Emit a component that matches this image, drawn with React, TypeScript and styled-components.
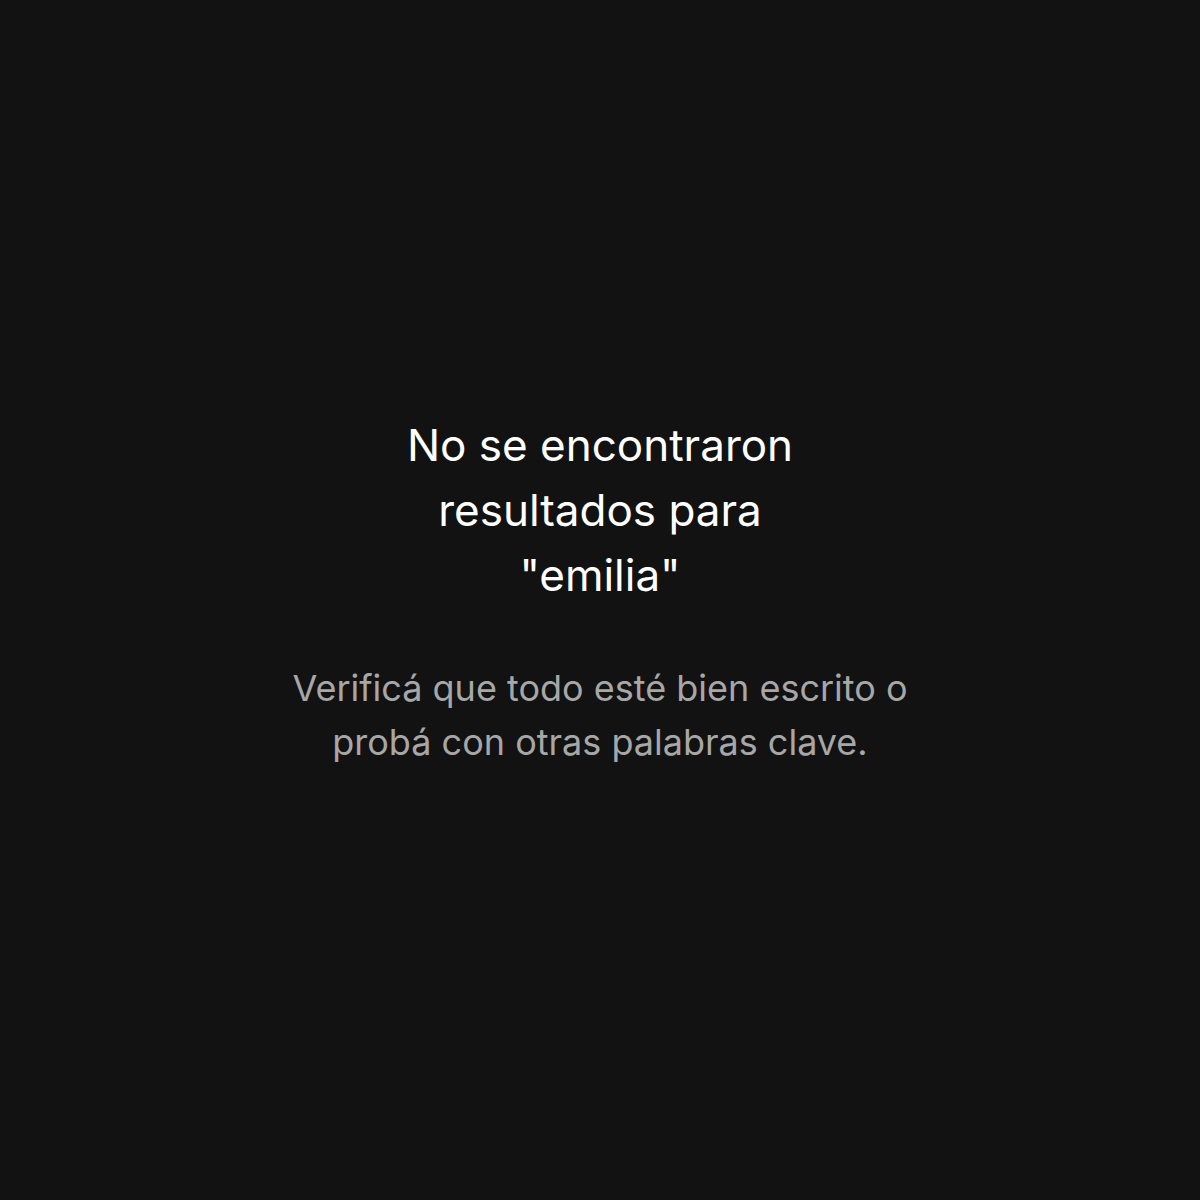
import { FC } from "react";
import styled, { createGlobalStyle } from "styled-components";

const GlobalStyle = createGlobalStyle`
  html, body {
    margin: 0;
    padding: 0;
    background-color: #121212;
  }
`;

const Page = styled.div`
  width: 100%;
  min-height: 1200px;
  box-sizing: border-box;
  padding-bottom: 18px;
  display: flex;
  align-items: center;
  justify-content: center;
  font-family: Inter, "Noto Sans", sans-serif;
`;

const EmptyState = styled.section`
  display: flex;
  flex-direction: column;
  align-items: center;
  text-align: center;
  gap: 53px;
`;

const Title = styled.h1`
  max-width: 420px;
  margin: 0;
  font-size: 44px;
  font-weight: 400;
  line-height: 65px;
  color: #ffffff;
`;

const Message = styled.p`
  max-width: 640px;
  margin: 0;
  font-size: 36px;
  font-weight: 400;
  line-height: 54px;
  color: #a7a7a7;
`;

const App: FC = () => {
  const query = "emilia";

  return (
    <>
      <GlobalStyle />
      <Page>
        <EmptyState>
          <Title>{`No se encontraron resultados para "${query}"`}</Title>
          <Message>
            Verificá que todo esté bien escrito o probá con otras palabras clave.
          </Message>
        </EmptyState>
      </Page>
    </>
  );
};

export default App;
